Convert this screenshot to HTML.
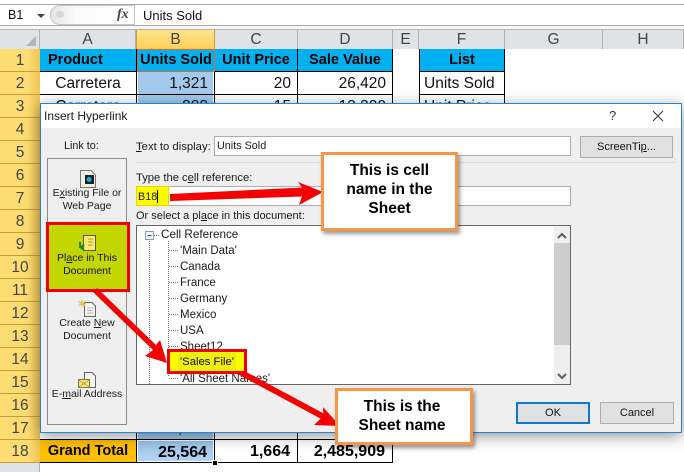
<!DOCTYPE html>
<html><head><meta charset="utf-8"><style>
html,body{margin:0;padding:0;background:#fff}
#p{position:relative;width:684px;height:472px;overflow:hidden;background:#fff;font-family:"Liberation Sans",sans-serif;color:#111}
#p div{position:absolute;box-sizing:border-box;white-space:nowrap}
.h{top:30px;height:19px;background:#dfe2e7;border-right:1px solid #aeb2b7;font-size:15.5px;line-height:19px;text-align:center;color:#444}
.r{left:0;width:40px;height:23px;background:linear-gradient(90deg,#fddc72,#fddc72 70%,#f0c455);border-bottom:1px solid #c79a3c;font-size:15.5px;line-height:23px;text-align:center;color:#444}
.c{height:23px;border-right:1px solid #000;border-bottom:1px solid #000;font-size:15.5px;line-height:23px;padding:0 6px;color:#111}
.b{background:#00b0f0;font-weight:bold;font-size:14.5px;text-align:center;color:#000}
.g{font-weight:bold;font-size:16px;background:#fff;text-align:right;color:#000}
.n{text-align:right}
.sel{box-shadow:inset 1px 0 #fff,inset -1px 0 #fff}
.d{font-size:10.8px;line-height:14px;color:#1a1a1a}
.tr{font-size:11.5px;line-height:14px;color:#1a1a1a}
.lnk{left:47px;width:80px;text-align:center;font-size:10.5px;line-height:13px;color:#1a1a1a}
.in{background:#fff;border:1px solid #aeaeae}
.btn{background:#e1e1e1;border:1px solid #adadad;font-size:11px;text-align:center;color:#111}
.co{background:#fff;border:3px solid #f79646;box-shadow:2px 3px 4px rgba(0,0,0,.4);font-weight:bold;font-size:15.5px;line-height:19px;text-align:center;color:#000}
u{text-decoration:underline}
</style></head><body><div id="p">

<div style="left:0;top:4px;width:684px;height:1px;background:#a9abae"></div>
<div style="left:0;top:25px;width:684px;height:1px;background:#a9abae"></div>
<div style="left:0;top:26px;width:684px;height:4px;background:#f8f8f8;border-bottom:1px solid #b5b5b5"></div>
<div style="left:8px;top:7px;font-size:12.5px;line-height:16px">B1</div>
<div style="left:37px;top:14px;width:0;height:0;border:4px solid transparent;border-top:4px solid #444;border-bottom:0"></div>
<div style="left:50px;top:5px;width:85px;height:20px;border:1px solid #c4c4c4;border-right:0;border-radius:11px 0 0 11px;background:linear-gradient(90deg,#e6e6e6,#fafafa 30%,#fff)"></div>
<div style="left:56px;top:11px;width:8px;height:7px;border-radius:4px;background:#d8d8d8"></div>
<div style="left:117px;top:6px;font:italic bold 14px 'Liberation Serif',serif;line-height:17px;color:#444">fx</div>
<div style="left:134px;top:5px;width:1px;height:20px;background:#c4c4c4"></div>
<div style="left:143px;top:7px;font-size:13px;line-height:17px">Units Sold</div>

<div class="h" style="left:0;width:40px"></div>
<div style="left:26px;top:36px;width:0;height:0;border-style:solid;border-width:0 0 10px 10px;border-color:transparent transparent #b4b7ba transparent"></div>
<div class="h" style="left:40px;width:96px">A</div>
<div class="h" style="left:136px;width:79px;background:linear-gradient(#fbe38c,#fdd25a);border-right:1px solid #d49b2e;border-left:1px solid #d49b2e">B</div>
<div class="h" style="left:215px;width:83px">C</div>
<div class="h" style="left:298px;width:95px">D</div>
<div class="h" style="left:393px;width:26px">E</div>
<div class="h" style="left:419px;width:86px">F</div>
<div class="h" style="left:505px;width:98px">G</div>
<div class="h" style="left:603px;width:81px">H</div>

<div class="r" style="top:49px">1</div><div class="r" style="top:72px">2</div><div class="r" style="top:95px">3</div><div class="r" style="top:118px">4</div><div class="r" style="top:141px">5</div><div class="r" style="top:164px">6</div><div class="r" style="top:187px">7</div><div class="r" style="top:210px">8</div><div class="r" style="top:233px">9</div><div class="r" style="top:256px">10</div><div class="r" style="top:279px">11</div><div class="r" style="top:302px">12</div><div class="r" style="top:325px">13</div><div class="r" style="top:348px">14</div><div class="r" style="top:371px">15</div><div class="r" style="top:394px">16</div><div class="r" style="top:417px">17</div><div class="r" style="top:440px">18</div>
<div style="left:0;top:463px;width:40px;height:9px;background:#dfe2e7;border-right:1px solid #aeb2b7"></div>

<div class="c b" style="left:40px;top:49px;width:97px;text-align:left;padding-left:8px">Product</div>
<div class="c b" style="left:137px;top:49px;width:78px;padding:0;border:1px solid #e9652a;line-height:21px">Units Sold</div>
<div class="c b" style="left:215px;top:49px;width:83px;padding:0">Unit Price</div>
<div class="c b" style="left:298px;top:49px;width:95px;padding:0">Sale Value</div>
<div class="c b" style="left:419px;top:49px;width:86px;border-left:1px solid #000">List</div>

<div class="c" style="left:40px;top:72px;width:97px;text-align:center">Carretera</div>
<div class="c n sel" style="left:137px;top:72px;width:78px;background:#a3c9ec;background-clip:padding-box">1,321</div>
<div class="c n" style="left:215px;top:72px;width:83px">20</div>
<div class="c n" style="left:298px;top:72px;width:95px">26,420</div>
<div class="c" style="left:419px;top:72px;width:86px;border-left:1px solid #000;padding-left:4px">Units Sold</div>

<div class="c" style="left:40px;top:95px;width:97px;text-align:center">Carretera</div>
<div class="c n sel" style="left:137px;top:95px;width:78px;background:#a3c9ec">888</div>
<div class="c n" style="left:215px;top:95px;width:83px">15</div>
<div class="c n" style="left:298px;top:95px;width:95px">13,320</div>
<div class="c" style="left:419px;top:95px;width:86px;border-left:1px solid #000;padding-left:4px">Unit Price</div>

<div class="c" style="left:40px;top:417px;width:97px;text-align:center">Amarilla</div>
<div class="c n sel" style="left:137px;top:417px;width:78px;background:#a3c9ec">2,000</div>
<div class="c n" style="left:215px;top:417px;width:83px">7</div>
<div class="c n" style="left:298px;top:417px;width:95px"></div>

<div class="c b" style="left:40px;top:440px;width:97px;background:#ffc000;padding:0">Grand Total</div>
<div class="c g" style="left:136px;top:439px;width:79px;height:24px;background:linear-gradient(#97c3ea,#b5d5f2);border:1px solid #000;box-shadow:inset 0 0 0 1px #fff;line-height:25px;padding-right:7px">25,564</div>
<div class="c g" style="left:215px;top:440px;width:83px;padding-right:7px;border-top:0">1,664</div>
<div class="c g" style="left:298px;top:440px;width:95px;padding-right:7px">2,485,909</div>
<div style="left:212px;top:460px;width:6px;height:6px;background:#000;border:1px solid #fff"></div>

<!-- dialog -->
<div style="left:40px;top:103px;width:642px;height:330px;background:#efefef;border:1px solid #1e88d6;box-shadow:0 3px 14px rgba(0,0,0,.42)"></div>
<div style="left:41px;top:104px;width:640px;height:24px;background:#fff"></div>
<div style="left:44px;top:109px;font-size:12px;line-height:14px;color:#1a1a1a">Insert Hyperlink</div>
<div style="left:609px;top:108px;font-size:13px;line-height:16px;color:#333">?</div>
<svg style="position:absolute;left:652px;top:110px" width="12" height="12"><path d="M1 1L11 11M11 1L1 11" stroke="#333" stroke-width="1"/></svg>

<div class="d" style="left:64px;top:139px">Link to:</div>
<div style="left:47px;top:158px;width:80px;height:267px;background:#efefef;border:1px solid #8c8c8c"></div>

<svg style="position:absolute;left:78px;top:169px" width="20" height="20"><path d="M2.500 1.500H13L17.500 6V18.500H2.500Z" fill="#f4f0dc" stroke="#777"/><rect x="7" y="6" width="9" height="9" fill="#123" /><circle cx="11" cy="10.500" r="2.500" fill="#2aa6d8"/></svg>
<div class="lnk" style="top:187px">E<u>x</u>isting File or<br>Web Page</div>

<div style="left:46px;top:222px;width:84px;height:70px;background:#c3d600;border:3px solid #f00000"></div>
<svg style="position:absolute;left:79px;top:234px" width="18" height="18"><path d="M4.500 1.500H16.500V16.500H4.500Z" fill="#fde96a" stroke="#555"/><path d="M9 5H14M9 8H14M9 11H14" stroke="#a89a30"/><path d="M1 8V13H5M5 10.500L2 13.500L5 16" fill="none" stroke="#1f8a2a" stroke-width="2"/></svg>
<div class="lnk" style="top:252px;color:#111">Pl<u>a</u>ce in This<br>Document</div>

<svg style="position:absolute;left:78px;top:299px" width="20" height="18"><path d="M6.500 3.500H14L17.500 7V17.500H6.500Z" fill="#f5f5f0" stroke="#666"/><path d="M9 9H15M9 11.500H15M9 14H15" stroke="#bbb"/><path d="M4 0L5 3L8 2L6 4.500L8 7L5 6L4 9L3 6L0 7L2 4.500L0 2L3 3Z" fill="#e8c84a"/></svg>
<div class="lnk" style="top:317px">Create <u>N</u>ew<br>Document</div>

<svg style="position:absolute;left:78px;top:371px" width="20" height="18"><path d="M6.500 1.500H14L17.500 5V16.500H6.500Z" fill="#f5f5f5" stroke="#666"/><rect x="0.500" y="8.500" width="11" height="8" fill="#fbe27a" stroke="#8a7a30"/><path d="M1 9L6 13L11 9M1 16L6 12L11 16" fill="none" stroke="#8a7a30" stroke-dasharray="1 1"/></svg>
<div class="lnk" style="top:388px">E-<u>m</u>ail Address</div>

<div class="d" style="left:136px;top:140px;font-size:11.3px"><u>T</u>ext to display:</div>
<div class="in" style="left:214px;top:136px;width:357px;height:20px"></div>
<div class="d" style="left:217px;top:139px">Units Sold</div>
<div class="btn" style="left:580px;top:136px;width:93px;height:22px;line-height:20px">ScreenTi<u>p</u>...</div>
<div style="left:136px;top:162px;width:539px;height:1px;background:#dcdcdc"></div>

<div class="d" style="left:136px;top:171px;font-size:11.2px">Type the c<u>e</u>ll reference:</div>
<div class="in" style="left:136px;top:186px;width:435px;height:20px"></div>
<div style="left:136px;top:186px;width:33px;height:20px;background:#fdfd00;border:1px solid #e4d800"></div>
<div class="d" style="left:138px;top:190px;color:#222">B18</div>
<div style="left:157px;top:190px;width:1px;height:13px;background:#000"></div>
<div class="d" style="left:136px;top:209px;font-size:11px">Or select a pl<u>a</u>ce in this document:</div>

<div style="left:136px;top:225px;width:435px;height:160px;background:#fff;border:1px solid #666"></div>
<div style="left:554px;top:226px;width:16px;height:158px;background:#efefef"></div>
<div style="left:554px;top:243px;width:16px;height:102px;background:#cdcdcd"></div>
<svg style="position:absolute;left:554px;top:226px" width="16" height="158"><path d="M4 12L8 8L12 12" fill="none" stroke="#606060" stroke-width="2"/><path d="M4 148L8 152L12 148" fill="none" stroke="#606060" stroke-width="2"/></svg>

<svg style="position:absolute;left:136px;top:226px" width="120" height="158">
<g stroke="#777" stroke-dasharray="1 1" fill="none">
<path d="M13.500 13V158"/><path d="M32.500 15V150"/>
<path d="M18 9.500H24"/><path d="M33 24.500H42M33 40.500H42M33 56.500H42M33 72.500H42M33 88.500H42M33 104.500H42M33 120.500H42M33 136.500H42M33 152.500H42"/>
</g>
<rect x="9.500" y="5.500" width="8" height="8" fill="#f4f6fa" stroke="#8a9bb0"/><path d="M11.500 9.500H15.500" stroke="#2a4a8a"/>
</svg>
<div class="tr" style="left:161px;top:228px;font-size:11.700px">Cell Reference</div>
<div class="tr" style="left:180px;top:244px">'Main Data'</div>
<div class="tr" style="left:180px;top:260px">Canada</div>
<div class="tr" style="left:180px;top:276px">France</div>
<div class="tr" style="left:180px;top:292px">Germany</div>
<div class="tr" style="left:180px;top:308px">Mexico</div>
<div class="tr" style="left:180px;top:324px">USA</div>
<div class="tr" style="left:180px;top:340px">Sheet12</div>
<div class="tr" style="left:180px;top:372px">'All Sheet Names'</div>

<div class="btn" style="left:516px;top:402px;width:74px;height:22px;line-height:18px;border:2px solid #0a78d4">OK</div>
<div class="btn" style="left:600px;top:402px;width:74px;height:22px;line-height:20px">Cancel</div>

<!-- arrows -->
<svg style="position:absolute;left:0;top:0" width="684" height="472">
<g fill="#f50000">
<path d="M170 194L302 187.500L298 182L323 192L299 205L302 196.500L170 201Z"/>
<path d="M93 292L153 350L145 356L167 363L160 340L156 345L97 288Z"/>
<path d="M241.400 369.400L323.400 413.400L323 407L340 426L314 425L320.600 418.600L238.600 374.600Z"/>
</g>
</svg>

<div style="left:167px;top:349px;width:80px;height:25px;background:#fdfd00;border:3px solid #f00000"></div>
<div style="left:178px;top:353px;width:58px;height:17px;background:#eeee10"></div>
<div class="tr" style="left:180px;top:355px;font-size:11.300px;color:#111">'Sales File'</div>

<!-- callouts -->
<div class="co" style="left:321px;top:152px;width:137px;height:79px;padding-top:6px">This is cell<br>name in the<br>Sheet</div>
<div class="co" style="left:335px;top:388px;width:138px;height:57px;padding:6px 4px 0 0">This is the<br>Sheet name</div>

</div></body></html>
